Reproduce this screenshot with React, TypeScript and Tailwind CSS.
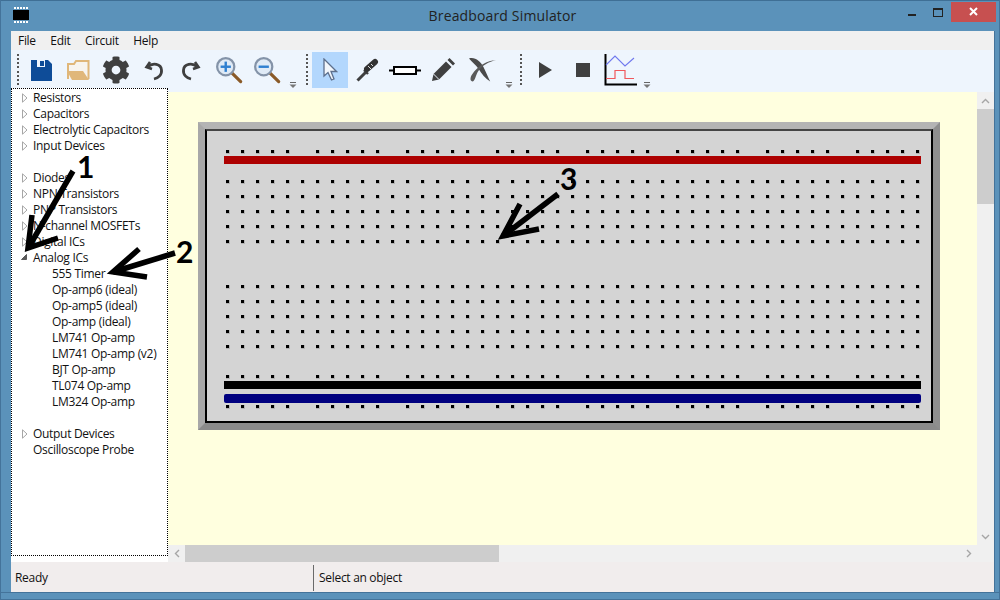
import React from "react";
import { FaCog } from "react-icons/fa";

const treeTop = ["Resistors", "Capacitors", "Electrolytic Capacitors", "Input Devices"];
const treeMid = ["Diodes", "NPN Transistors", "PNP Transistors", "N-channel MOSFETs", "Digital ICs"];
const analog = [
  "555 Timer",
  "Op-amp6 (ideal)",
  "Op-amp5 (ideal)",
  "Op-amp (ideal)",
  "LM741 Op-amp",
  "LM741 Op-amp (v2)",
  "BJT Op-amp",
  "TL074 Op-amp",
  "LM324 Op-amp",
];

const columns = Array.from({ length: 47 }, (_, i) => i);
const railRows = [150, 375, 405];
const mainRows = [180, 195, 210, 225, 240, 285, 300, 315, 330, 345];

const TreeRow = ({ label, open }: { label: string; open?: boolean }) => (
  <div className="flex h-4 items-center pl-[9px]">
    <svg width="8" height="10" viewBox="0 0 8 10" className="mr-[4px] shrink-0">
      {open ? (
        <path d="M0.5 6.5 L5.5 1.5 L5.5 6.5 Z" fill="#595959" stroke="#595959" />
      ) : (
        <path d="M1.5 0.8 L6 5 L1.5 9.2 Z" fill="#fff" stroke="#a6a6a6" />
      )}
    </svg>
    <span className="whitespace-nowrap">{label}</span>
  </div>
);

const ToolBtn = ({ children, active }: { children: React.ReactNode; active?: boolean }) => (
  <div className="flex h-9 w-[37.6px] shrink-0 items-center justify-start">
    <div className={`flex h-9 w-9 items-center justify-center ${active ? "bg-[#b3d7fd]" : ""}`}>{children}</div>
  </div>
);

const Grip = () => (
  <div className="flex h-[31px] w-[3px] shrink-0 flex-col justify-between">
    {Array.from({ length: 8 }, (_, i) => (
      <div key={i} className="h-[2px] w-[2px] bg-[#555]" />
    ))}
  </div>
);

const Overflow = () => (
  <svg width="8" height="6" viewBox="0 0 8 6" className="mt-[30px] shrink-0">
    <path d="M1 0.5 H7" stroke="#666" />
    <path d="M0.5 2.5 H7.5 L4 6 Z" fill="#777" />
  </svg>
);

const Magnifier = ({ plus }: { plus?: boolean }) => (
  <svg width="28" height="28" viewBox="0 0 30 30">
    <path d="M18 18 L27.5 27.5" stroke="#8a5a28" strokeWidth="3.4" strokeLinecap="round" />
    <circle cx="11.5" cy="11.5" r="9.2" fill="#dfeaf6" stroke="#8493a8" strokeWidth="2.4" />
    <path d="M6 11.5 H17" stroke="#2f7fd0" strokeWidth="2.6" />
    {plus ? <path d="M11.5 6 V17" stroke="#2f7fd0" strokeWidth="2.6" /> : null}
  </svg>
);

const App = () => {
  return (
    <div className="relative flex h-[600px] w-[1000px] flex-col overflow-hidden border-x border-[#44739a] bg-[#5b92ba] font-['Open_Sans',sans-serif] text-[12px] leading-4 tracking-[-0.3px] text-[#111]">
      {/* title bar */}
      <div className="relative flex h-[31px] shrink-0 items-center justify-center border-t border-[#3f6f95] pl-[5px]">
        <span className="pb-[1px] text-[14px] tracking-[0.15px] text-[#222]">Breadboard Simulator</span>
        <svg width="18" height="16" viewBox="0 0 18 16" className="absolute left-[11px] top-[6px]">
          <rect x="1" y="3" width="16" height="10" fill="#000" />
          <path d="M2 1 H16 M2 15 H16" stroke="#fff" strokeWidth="2" strokeDasharray="2 1" />
        </svg>
        <div className="absolute right-[3px] top-0 flex h-[21px] items-center">
          <div className="mr-[17px] mt-[6px] h-[2px] w-[8px] bg-[#222]" />
          <div className="mr-[8px] mt-[1px] h-[9px] w-[10px] border border-t-[2px] border-[#222]" />
          <div className="flex h-[20px] w-[45px] items-center justify-center bg-[#c75050]">
            <svg width="9" height="9" viewBox="0 0 9 9">
              <path d="M1 1 L8 8 M8 1 L1 8" stroke="#fff" strokeWidth="2" />
            </svg>
          </div>
        </div>
      </div>

      <div className="ml-[10px] mr-[4px] flex min-h-0 flex-1 flex-col border-r border-[#44739a]">
        {/* menu */}
        <div className="flex h-[19px] shrink-0 items-center gap-[14.5px] bg-[#f0f0f0] pl-[7px]">
          <span>File</span>
          <span>Edit</span>
          <span>Circuit</span>
          <span>Help</span>
        </div>

        {/* toolbar */}
        <div className="flex h-[42px] shrink-0 items-start bg-[#eef5fd] pl-[6px] pt-[2px]">
          <div className="mr-[3px] mt-[2px]">
            <Grip />
          </div>
          <ToolBtn>
            <svg width="21" height="21" viewBox="0 0 21 21">
              <path d="M0 0 H17 L21 4 V21 H0 Z" fill="#0e4c98" />
              <rect x="6" y="0" width="8" height="7" fill="#eef5fd" />
              <rect x="9" y="1" width="4" height="5" fill="#0e4c98" />
            </svg>
          </ToolBtn>
          <ToolBtn>
            <svg width="23" height="21" viewBox="0 0 23 21">
              <path d="M1 19 V4 H7 L9 1 H21.5 V19" fill="#f7f4ef" stroke="#e0b77a" strokeWidth="2" />
              <path d="M0 11 H16 L22 20 H5 Z" fill="#e0b77a" />
            </svg>
          </ToolBtn>
          <ToolBtn>
            <FaCog size={28} color="#3f3f3f" />
          </ToolBtn>
          <ToolBtn>
            <svg width="20" height="22" viewBox="0 0 20 22" fill="none">
              <path d="M6 3 L2.5 8 L8 10" stroke="#3f3f3f" strokeWidth="2.6" />
              <path d="M3.5 8 C9 3 17 5 17.5 11 C18 16 14 19 10 20" stroke="#3f3f3f" strokeWidth="2.8" />
            </svg>
          </ToolBtn>
          <ToolBtn>
            <svg width="20" height="22" viewBox="0 0 20 22" fill="none">
              <path d="M14 3 L17.5 8 L12 10" stroke="#3f3f3f" strokeWidth="2.6" />
              <path d="M16.5 8 C11 3 3 5 2.5 11 C2 16 6 19 10 20" stroke="#3f3f3f" strokeWidth="2.8" />
            </svg>
          </ToolBtn>
          <ToolBtn>
            <Magnifier plus />
          </ToolBtn>
          <ToolBtn>
            <Magnifier />
          </ToolBtn>
          <div className="ml-[3px] mr-[9px]">
            <Overflow />
          </div>
          <div className="mr-[3px] mt-[2px]">
            <Grip />
          </div>
          <ToolBtn active>
            <svg width="16" height="24" viewBox="0 0 16 24">
              <path d="M2 1 L2 18 L6 14.5 L9.5 22 L12 21 L9 13.5 L14.5 13.5 Z" fill="#f2f6fb" stroke="#5d6f8c" strokeWidth="1.3" />
            </svg>
          </ToolBtn>
          <ToolBtn>
            <svg width="24" height="24" viewBox="0 0 24 24" fill="none">
              <path d="M1.5 22.5 L10 14" stroke="#3f3f3f" strokeWidth="3" />
              <path d="M8 12 L12 16" stroke="#3f3f3f" strokeWidth="2.4" />
              <path d="M11 11 L19 4" stroke="#333" strokeWidth="6" strokeLinecap="round" />
              <path d="M12 8 L15 11 M15 6 L17 8" stroke="#ddd" strokeWidth="1" />
            </svg>
          </ToolBtn>
          <ToolBtn>
            <svg width="32" height="9" viewBox="0 0 32 9" fill="none">
              <path d="M0 4.5 H5 M27 4.5 H32" stroke="#000" strokeWidth="2" />
              <rect x="5" y="1" width="22" height="7" fill="#fff" stroke="#000" strokeWidth="2" />
            </svg>
          </ToolBtn>
          <ToolBtn>
            <svg width="24" height="24" viewBox="0 0 24 24">
              <path d="M1 23 L2.5 16 L15 3.5 L20.5 9 L8 21.5 Z" fill="#3f3f3f" />
              <path d="M16.5 2 L18.5 0 L24 5.5 L22 7.5 Z" fill="#3f3f3f" />
              <path d="M2.5 16 L8 21.5" stroke="#eef5fd" strokeWidth="1" />
            </svg>
          </ToolBtn>
          <ToolBtn>
            <svg width="27" height="26" viewBox="0 0 28 26" className="ml-[3px]">
              <path d="M0 1 C6 -1 12 4 15 10 C18 16 20 21 22 25 C17 22 13 17 10 12 C7 7 3 5 0 1 Z" fill="#4a4a4a" />
              <path d="M28 3 C21 4 13 9 9 15 C7 19 6 24 4 25 C1 25 1 21 3 18 C9 9 19 3 28 3 Z" fill="#5a5a5a" />
            </svg>
          </ToolBtn>
          <div className="ml-[5px] mr-[7px]">
            <Overflow />
          </div>
          <div className="mr-[4px] mt-[2px]">
            <Grip />
          </div>
          <ToolBtn>
            <svg width="13" height="16" viewBox="0 0 13 16">
              <path d="M0 0 L13 8 L0 16 Z" fill="#3f3f3f" />
            </svg>
          </ToolBtn>
          <ToolBtn>
            <div className="h-[14px] w-[14px] bg-[#404040]" />
          </ToolBtn>
          <ToolBtn>
            <svg width="33" height="32" viewBox="0 0 33 32" fill="none">
              <path d="M1.5 0 V30.5 H33" stroke="#000" strokeWidth="2" />
              <path d="M2 11 L11 2 L21 12 L30 4" stroke="#6f78ee" strokeWidth="1.1" />
              <path d="M2 24.5 H11 V16.5 H21 V24.5 H30" stroke="#f0575c" strokeWidth="1.2" />
            </svg>
          </ToolBtn>
          <div className="ml-[3px]">
            <Overflow />
          </div>
        </div>

        {/* body */}
        <div className="flex min-h-0 flex-1">
          <div className="z-10 -mt-[4px] flex w-[157px] shrink-0 flex-col bg-white pb-[6px]">
            <div className="flex-1 border border-dotted border-black pt-[1px]">
              {treeTop.map((t) => (
                <TreeRow key={t} label={t} />
              ))}
              <div className="h-4" />
              {treeMid.map((t) => (
                <TreeRow key={t} label={t} />
              ))}
              <TreeRow label="Analog ICs" open />
              {analog.map((t) => (
                <div key={t} className="flex h-4 items-center whitespace-nowrap pl-[40px]">
                  {t}
                </div>
              ))}
              <div className="h-4" />
              <TreeRow label="Output Devices" />
              <div className="flex h-4 items-center pl-[21px]">Oscilloscope Probe</div>
            </div>
          </div>

          <div className="flex min-w-0 flex-1 flex-col">
            <div className="flex min-h-0 flex-1">
              {/* canvas */}
              <div className="min-w-0 flex-1 bg-[#ffffdf] pl-[30px] pt-[30px]">
                <div className="h-[308px] w-[742px] border-[7px] border-b-[#8a8a8a] border-l-[#a8a8a8] border-r-[#8e8e8e] border-t-[#b4b4b4]">
                  <div className="h-full w-full border-2 border-black border-t-[#444] bg-[#d4d4d4]">
                    <svg width="724" height="290" viewBox="207 131 724 290" className="block">
                      {railRows.map((y) =>
                        columns
                          .filter((c) => c % 6 !== 5)
                          .map((c) => (
                            <g key={`${y}-${c}`}>
                              <rect x={226 + c * 15} y={y} width="4" height="4" fill="#b4b4b4" />
                              <rect x={226 + c * 15} y={y} width="3" height="3" fill="#000" />
                            </g>
                          )),
                      )}
                      {mainRows.map((y) =>
                        columns.map((c) => (
                          <g key={`${y}-${c}`}>
                            <rect x={226 + c * 15} y={y} width="4" height="4" fill="#b4b4b4" />
                            <rect x={226 + c * 15} y={y} width="3" height="3" fill="#000" />
                          </g>
                        )),
                      )}
                      <rect x="224" y="156" width="697" height="8" fill="#ad0000" />
                      <rect x="224" y="381" width="697" height="8" fill="#000" />
                      <rect x="224" y="394" width="697" height="9" rx="2" fill="#00007f" />
                    </svg>
                  </div>
                </div>
              </div>
              {/* vertical scrollbar */}
              <div className="flex w-[17px] shrink-0 flex-col bg-[#f0f0f0]">
                <div className="flex h-[17px] items-center justify-center">
                  <svg width="9" height="6" viewBox="0 0 9 6" fill="none">
                    <path d="M1 5 L4.5 1.5 L8 5" stroke="#a6a6a6" strokeWidth="1.4" />
                  </svg>
                </div>
                <div className="h-[95px] bg-[#cdcdcd]" />
                <div className="flex-1" />
                <div className="flex h-[17px] items-center justify-center">
                  <svg width="9" height="6" viewBox="0 0 9 6" fill="none">
                    <path d="M1 1 L4.5 4.5 L8 1" stroke="#a6a6a6" strokeWidth="1.4" />
                  </svg>
                </div>
              </div>
            </div>
            {/* horizontal scrollbar */}
            <div className="flex h-[17px] shrink-0 bg-[#f0f0f0]">
              <div className="flex w-[17px] items-center justify-center">
                <svg width="6" height="9" viewBox="0 0 6 9" fill="none">
                  <path d="M5 1 L1.5 4.5 L5 8" stroke="#a6a6a6" strokeWidth="1.4" />
                </svg>
              </div>
              <div className="w-[314px] bg-[#cdcdcd]" />
              <div className="flex-1" />
              <div className="mr-[17px] flex w-[17px] items-center justify-center">
                <svg width="6" height="9" viewBox="0 0 6 9" fill="none">
                  <path d="M1 1 L4.5 4.5 L1 8" stroke="#a6a6a6" strokeWidth="1.4" />
                </svg>
              </div>
            </div>
          </div>
        </div>

        {/* status bar */}
        <div className="flex h-[30px] shrink-0 items-center bg-[#f1eded] pt-[1px]">
          <div className="w-[302px] pl-[4px] pt-[1px]">Ready</div>
          <div className="h-[26px] w-px bg-[#6a6a6a]" />
          <div className="pl-[5px] pt-[1px]">Select an object</div>
        </div>
      </div>
      <div className="h-[8px] shrink-0 border-y border-[#44739a]" />

      {/* annotations on top of the screenshot */}
      <svg width="1000" height="600" viewBox="0 0 1000 600" fill="none" className="pointer-events-none absolute left-[-1px] top-0 z-20">
        <g stroke="#000" strokeWidth="5.5" strokeLinejoin="miter">
          <path d="M73 171 L30 245" />
          <path d="M32 215 L28 248 L58 238" />
          <path d="M175 253 L113 272" />
          <path d="M139 249 L113 272 L147 277" />
          <path d="M558 194 L503 236" />
          <path d="M520 204 L503 236 L539 229" />
        </g>
      </svg>
      <span className="absolute left-[76px] top-[155px] z-20 font-['Lato',sans-serif] text-[30px] font-bold leading-[22px] tracking-normal text-black">1</span>
      <span className="absolute left-[175px] top-[240px] z-20 font-['Lato',sans-serif] text-[30px] font-bold leading-[22px] tracking-normal text-black">2</span>
      <span className="absolute left-[559px] top-[167px] z-20 font-['Lato',sans-serif] text-[30px] font-bold leading-[22px] tracking-normal text-black">3</span>
    </div>
  );
};

export default App;
